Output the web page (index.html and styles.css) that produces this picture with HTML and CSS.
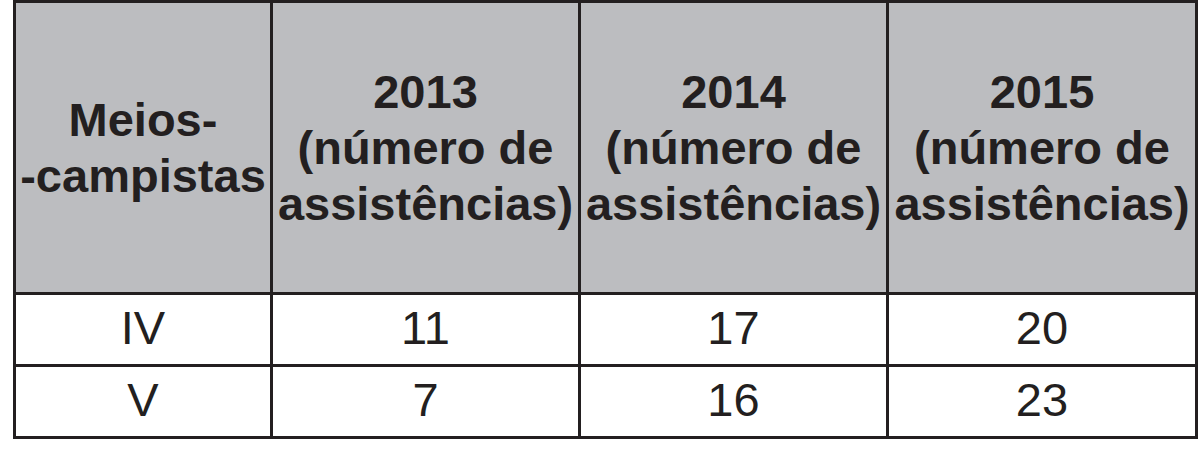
FILE: index.html
```html
<!DOCTYPE html>
<html lang="pt">
<head>
<meta charset="utf-8">
<link rel="stylesheet" href="styles.css">
</head>
<body>
<table class="stats">
  <colgroup>
    <col class="c1"><col class="c2"><col class="c3"><col class="c4">
  </colgroup>
  <thead>
    <tr class="head">
      <th>Meios-<br>-campistas</th>
      <th>2013<br>(número de<br>assistências)</th>
      <th>2014<br>(número de<br>assistências)</th>
      <th>2015<br>(número de<br>assistências)</th>
    </tr>
  </thead>
  <tbody>
    <tr class="row"><td>IV</td><td>11</td><td>17</td><td>20</td></tr>
    <tr class="row"><td>V</td><td>7</td><td>16</td><td>23</td></tr>
  </tbody>
</table>
</body>
</html>
```
FILE: styles.css
```css
html, body {
  margin: 0;
  padding: 0;
  background: #ffffff;
}
.stats {
  margin-left: 13px;
  border-collapse: collapse;
  width: 1184px;
  table-layout: fixed;
  font-family: "Liberation Sans", Arial, sans-serif;
  color: #231f20;
}
.c1 { width: 257px; }
.c2 { width: 308px; }
.c3 { width: 308px; }
.c4 { width: 309px; }
.stats th, .stats td {
  border: 3px solid #231f20;
  text-align: center;
  padding: 0;
}
.head th {
  background: #bcbdc0;
  height: 289px;
  font-size: 47px;
  font-weight: bold;
  line-height: 56px;
  vertical-align: middle;
}
.row td {
  height: 66px;
  padding-bottom: 3px;
  font-size: 47px;
  line-height: 50px;
}
```
